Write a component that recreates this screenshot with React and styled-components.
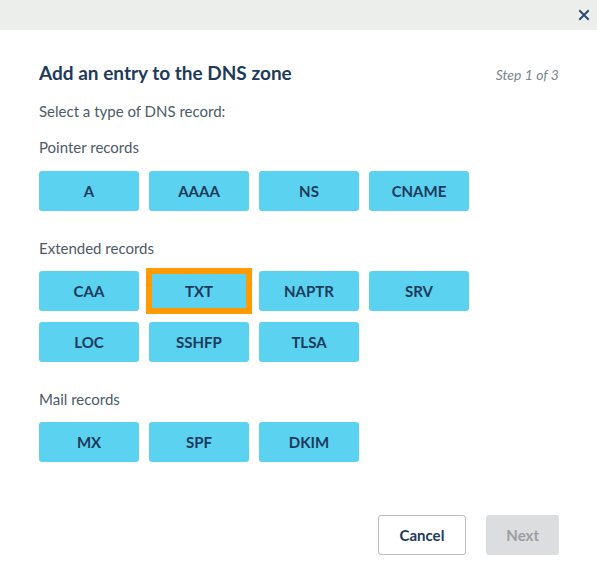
import styled, { createGlobalStyle } from 'styled-components';

const GlobalStyle = createGlobalStyle`
  html, body {
    margin: 0;
    padding: 0;
    background: #ffffff;
    font-family: Lato, "Liberation Sans", sans-serif;
  }
`;

const Modal = styled.div`
  width: 597px;
  height: 583px;
  display: flex;
  flex-direction: column;
  background: #ffffff;
`;

const TopBar = styled.div`
  height: 30px;
  background: #eceeec;
  display: flex;
  align-items: center;
  justify-content: flex-end;
  padding-right: 6px;
`;

const CloseButton = styled.button`
  border: none;
  background: none;
  padding: 0;
  width: 14px;
  height: 14px;
  display: flex;
  cursor: pointer;
`;

const Body = styled.div`
  flex: 1;
  display: flex;
  flex-direction: column;
  padding: 31px 38px 28px 39px;
`;

const Header = styled.div`
  display: flex;
  justify-content: space-between;
  align-items: baseline;
`;

const Title = styled.h2`
  margin: 0;
  font-size: 19px;
  font-weight: 700;
  color: #1d3a5c;
`;

const Step = styled.span`
  font-size: 14px;
  font-style: italic;
  color: #7a8590;
`;

const Intro = styled.p`
  margin: 18px 0 0;
  font-size: 15px;
  color: #4d5a68;
`;

const GroupLabel = styled.div`
  margin-top: ${({ $first }) => ($first ? '18px' : '28px')};
  font-size: 15px;
  color: #4d5a68;
`;

const Grid = styled.div`
  margin-top: ${({ $first }) => ($first ? '15px' : '14px')};
  display: grid;
  grid-template-columns: repeat(4, 100px);
  column-gap: 10px;
  row-gap: 11px;
`;

const RecordButton = styled.button`
  height: 40px;
  border: none;
  background: #5bd2ef;
  color: #1d3a5c;
  font-family: inherit;
  font-size: 15px;
  font-weight: 700;
  cursor: pointer;
  box-shadow: ${({ $active }) => ($active ? 'inset 0 0 0 3px #ff9a00' : 'none')};
  outline: ${({ $active }) => ($active ? '3px solid #ff9a00' : 'none')};
  border-radius: ${({ $active }) => ($active ? '0' : '3px')};
`;

const Footer = styled.div`
  margin-top: auto;
  display: flex;
  justify-content: flex-end;
  gap: 20px;
`;

const FooterButton = styled.button`
  height: 40px;
  padding: 0 ${({ $primary }) => ($primary ? '19px' : '21px')};
  border-radius: 3px;
  border: 1px solid ${({ $primary }) => ($primary ? '#dcdddf' : '#b9bcc0')};
  background: ${({ $primary }) => ($primary ? '#dcdddf' : '#ffffff')};
  color: ${({ $primary }) => ($primary ? '#9a9da2' : '#1d3a5c')};
  font-family: inherit;
  font-size: 15px;
  font-weight: 700;
`;

const groups = [
  { label: 'Pointer records', items: ['A', 'AAAA', 'NS', 'CNAME'] },
  { label: 'Extended records', items: ['CAA', 'TXT', 'NAPTR', 'SRV', 'LOC', 'SSHFP', 'TLSA'] },
  { label: 'Mail records', items: ['MX', 'SPF', 'DKIM'] },
];

export default function App() {
  return (
    <>
      <GlobalStyle />
      <Modal>
        <TopBar>
          <CloseButton aria-label="Close">
            <svg width="14" height="14" viewBox="0 0 14 14">
              <path d="M3 3 L11 11 M11 3 L3 11" stroke="#2c4a6e" strokeWidth="2" strokeLinecap="square" />
            </svg>
          </CloseButton>
        </TopBar>
        <Body>
          <Header>
            <Title>Add an entry to the DNS zone</Title>
            <Step>Step 1 of 3</Step>
          </Header>
          <Intro>Select a type of DNS record:</Intro>
          {groups.map((g, i) => (
            <div key={g.label}>
              <GroupLabel $first={i === 0}>{g.label}</GroupLabel>
              <Grid $first={i === 0}>
                {g.items.map((item) => (
                  <RecordButton key={item} $active={item === 'TXT'}>
                    {item}
                  </RecordButton>
                ))}
              </Grid>
            </div>
          ))}
          <Footer>
            <FooterButton>Cancel</FooterButton>
            <FooterButton $primary disabled>Next</FooterButton>
          </Footer>
        </Body>
      </Modal>
    </>
  );
}
